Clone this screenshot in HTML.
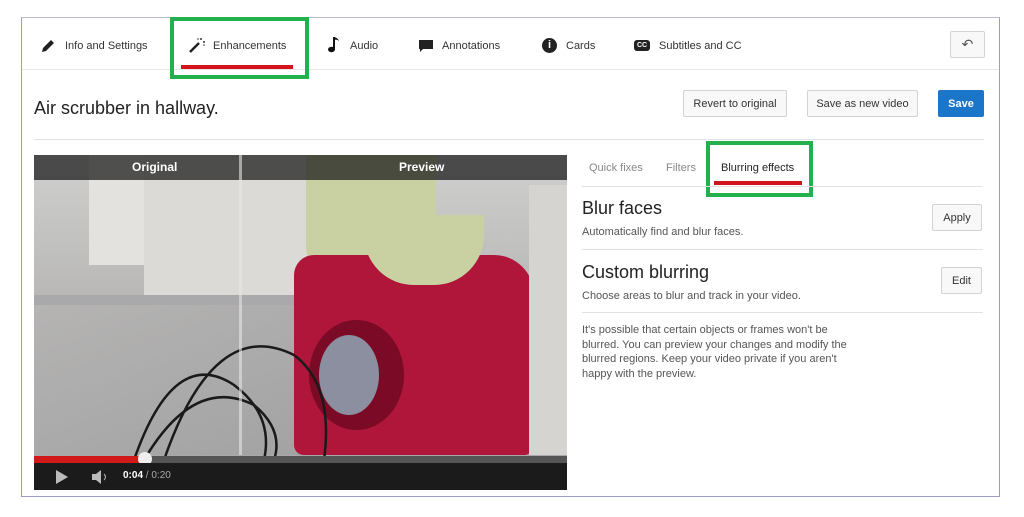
<!DOCTYPE html>
<html><head><style>
*{margin:0;padding:0;box-sizing:border-box}
body{width:1024px;height:517px;background:#fff;position:relative;font-family:"Liberation Sans",sans-serif;overflow:hidden}
.a{position:absolute}
.tab{position:absolute;top:40px;font-size:11px;color:#333;white-space:nowrap}
.btn{position:absolute;background:#f8f8f8;border:1px solid #d3d3d3;border-radius:2px;font-size:11px;color:#333;text-align:center;font-weight:bold}
.hr{position:absolute;height:1px;background:#e2e2e2}
.txt{position:absolute;color:#555;font-size:11px}
</style></head><body>
<div class="a" style="left:21px;top:17px;width:979px;height:480px;border:1px solid #9c9cc9;border-top-color:#b8b8d8"></div>
<div class="hr" style="left:22px;top:69px;width:977px;background:#e6e6e6"></div>

<svg class="a" style="left:40px;top:38px" width="16" height="16" viewBox="0 0 16 16"><path d="M2 14 L3 10 L11 2 L14 5 L6 13 Z" fill="#222"/></svg>
<div class="tab" style="left:65px">Info and Settings</div>
<svg class="a" style="left:188px;top:37px" width="18" height="16" viewBox="0 0 18 16"><path d="M2 15 L11 6" stroke="#222" stroke-width="2.5"/><g fill="#333"><circle cx="13" cy="2" r="1"/><circle cx="16" cy="5" r="1"/><circle cx="10" cy="2" r="0.8"/><circle cx="16" cy="8" r="0.8"/></g></svg>
<div class="tab" style="left:213px">Enhancements</div>
<div class="a" style="left:170px;top:17px;width:139px;height:62px;border:4px solid #22b14c"></div>
<div class="a" style="left:181px;top:65px;width:112px;height:4px;background:#d4141c"></div>
<svg class="a" style="left:327px;top:36px" width="14" height="18" viewBox="0 0 14 18"><path d="M7 1 V13" stroke="#111" stroke-width="2"/><ellipse cx="4.5" cy="13.5" rx="3.5" ry="2.7" fill="#111"/><path d="M7 1 Q11 2 12 5 Q10 3 7 4Z" fill="#111"/></svg>
<div class="tab" style="left:350px">Audio</div>
<svg class="a" style="left:418px;top:39px" width="16" height="14" viewBox="0 0 16 14"><path d="M1 1 H15 V10 H5 L2 13 V10 H1Z" fill="#222"/></svg>
<div class="tab" style="left:442px">Annotations</div>
<div class="a" style="left:542px;top:38px;width:15px;height:15px;border-radius:50%;background:#222;color:#fff;font-size:11px;font-weight:bold;text-align:center;line-height:15px">i</div>
<div class="tab" style="left:566px">Cards</div>
<div class="a" style="left:634px;top:40px;width:16px;height:11px;border-radius:3px;background:#222;color:#fff;font-size:7px;font-weight:bold;text-align:center;line-height:11px">CC</div>
<div class="tab" style="left:659px">Subtitles and CC</div>
<div class="btn" style="left:950px;top:31px;width:35px;height:27px;font-size:14px;line-height:24px;color:#555;font-weight:normal">&#8630;</div>

<div class="a" style="left:34px;top:98px;font-size:18px;color:#222">Air scrubber in hallway.</div>
<div class="btn" style="left:683px;top:90px;width:104px;height:27px;padding-top:7px;font-weight:normal">Revert to original</div>
<div class="btn" style="left:807px;top:90px;width:111px;height:27px;padding-top:7px;font-weight:normal">Save as new video</div>
<div class="btn" style="left:938px;top:90px;width:46px;height:27px;padding-top:7px;background:#1b76c9;border-color:#1b76c9;color:#fff">Save</div>
<div class="hr" style="left:34px;top:139px;width:950px"></div>

<!-- video -->
<div class="a" style="left:34px;top:155px;width:533px;height:335px;background:#a9a9ab;overflow:hidden">
 <div class="a" style="left:0;top:0;width:533px;height:140px;background:linear-gradient(#cfd0cf,#b9b8b6)"></div>
 <div class="a" style="left:55px;top:0;width:70px;height:110px;background:#e3e2de"></div>
 <div class="a" style="left:110px;top:0;width:170px;height:140px;background:#dcdad6"></div>
 <div class="a" style="left:0;top:150px;width:533px;height:150px;background:linear-gradient(160deg,#b5b4b3,#9c9c9e)"></div>
 <div class="a" style="left:272px;top:0;width:130px;height:130px;background:#c9d1a3;border-radius:0 0 40px 40px"></div>
 <div class="a" style="left:260px;top:100px;width:240px;height:200px;background:#b0163a;border-radius:20px 40px 10px 10px"></div>
 <div class="a" style="left:330px;top:60px;width:120px;height:70px;background:#c9d1a3;border-radius:0 0 50px 50px"></div>
 <div class="a" style="left:275px;top:165px;width:95px;height:110px;border-radius:50%;background:#7a0a25"></div>
 <div class="a" style="left:285px;top:180px;width:60px;height:80px;border-radius:50%;background:#8b8fa0"></div>
 <div class="a" style="left:495px;top:30px;width:38px;height:270px;background:#d5d4d0"></div>
 <svg class="a" style="left:0;top:0" width="533" height="335"><g fill="none" stroke="#1a1a1a" stroke-width="2.5"><path d="M100 305 Q140 190 200 230 Q240 260 230 305"/><path d="M130 305 Q180 160 260 200 Q300 230 290 305"/><path d="M110 305 Q160 220 220 250 Q250 275 240 305"/></g></svg>
 <div class="a" style="left:0;top:0;width:533px;height:25px;background:rgba(30,30,30,.75)"></div>
 <div class="a" style="left:205px;top:0;width:3px;height:300px;background:rgba(230,230,230,.6)"></div>
 <div class="a" style="left:98px;top:5px;color:#fff;font-size:12px;font-weight:bold">Original</div>
 <div class="a" style="left:365px;top:5px;color:#fff;font-size:12px;font-weight:bold">Preview</div>
 <div class="a" style="left:0;top:301px;width:533px;height:7px;background:#555"></div>
 <div class="a" style="left:0;top:301px;width:111px;height:7px;background:#d01a1a"></div>
 <div class="a" style="left:104px;top:297px;width:14px;height:14px;border-radius:50%;background:#eee"></div>
 <div class="a" style="left:0;top:308px;width:533px;height:27px;background:#1b1b1b"></div>
 <svg class="a" style="left:20px;top:313px" width="60" height="18"><path d="M2 2 L14 9 L2 16Z" fill="#bbb"/><path d="M38 6 H42 L47 2 V16 L42 12 H38Z" fill="#bbb"/><path d="M50 6 Q53 9 50 12" stroke="#bbb" fill="none"/></svg>
 <div class="a" style="left:89px;top:315px;font-size:10px;color:#fff"><b>0:04</b> <span style="color:#aaa">/ 0:20</span></div>
</div>

<!-- right panel -->
<div class="a" style="left:589px;top:162px;font-size:11px;color:#888">Quick fixes</div>
<div class="a" style="left:666px;top:162px;font-size:11px;color:#888">Filters</div>
<div class="a" style="left:721px;top:162px;font-size:11px;color:#222">Blurring effects</div>
<div class="a" style="left:706px;top:141px;width:107px;height:56px;border:4px solid #22b14c"></div>
<div class="a" style="left:714px;top:181px;width:88px;height:4px;background:#d4141c"></div>
<div class="hr" style="left:582px;top:186px;width:401px"></div>
<div class="a" style="left:582px;top:198px;font-size:18px;color:#222">Blur faces</div>
<div class="txt" style="left:582px;top:226px">Automatically find and blur faces.</div>
<div class="btn" style="left:932px;top:204px;width:50px;height:27px;padding-top:7px;font-weight:normal">Apply</div>
<div class="hr" style="left:582px;top:249px;width:401px"></div>
<div class="a" style="left:582px;top:262px;font-size:18px;color:#222">Custom blurring</div>
<div class="txt" style="left:582px;top:290px">Choose areas to blur and track in your video.</div>
<div class="btn" style="left:941px;top:267px;width:41px;height:27px;padding-top:7px;font-weight:normal">Edit</div>
<div class="hr" style="left:582px;top:312px;width:401px"></div>
<div class="txt" style="left:582px;top:323px;line-height:14.5px;width:280px">It's possible that certain objects or frames won't be blurred. You can preview your changes and modify the blurred regions. Keep your video private if you aren't happy with the preview.</div>
</body></html>
